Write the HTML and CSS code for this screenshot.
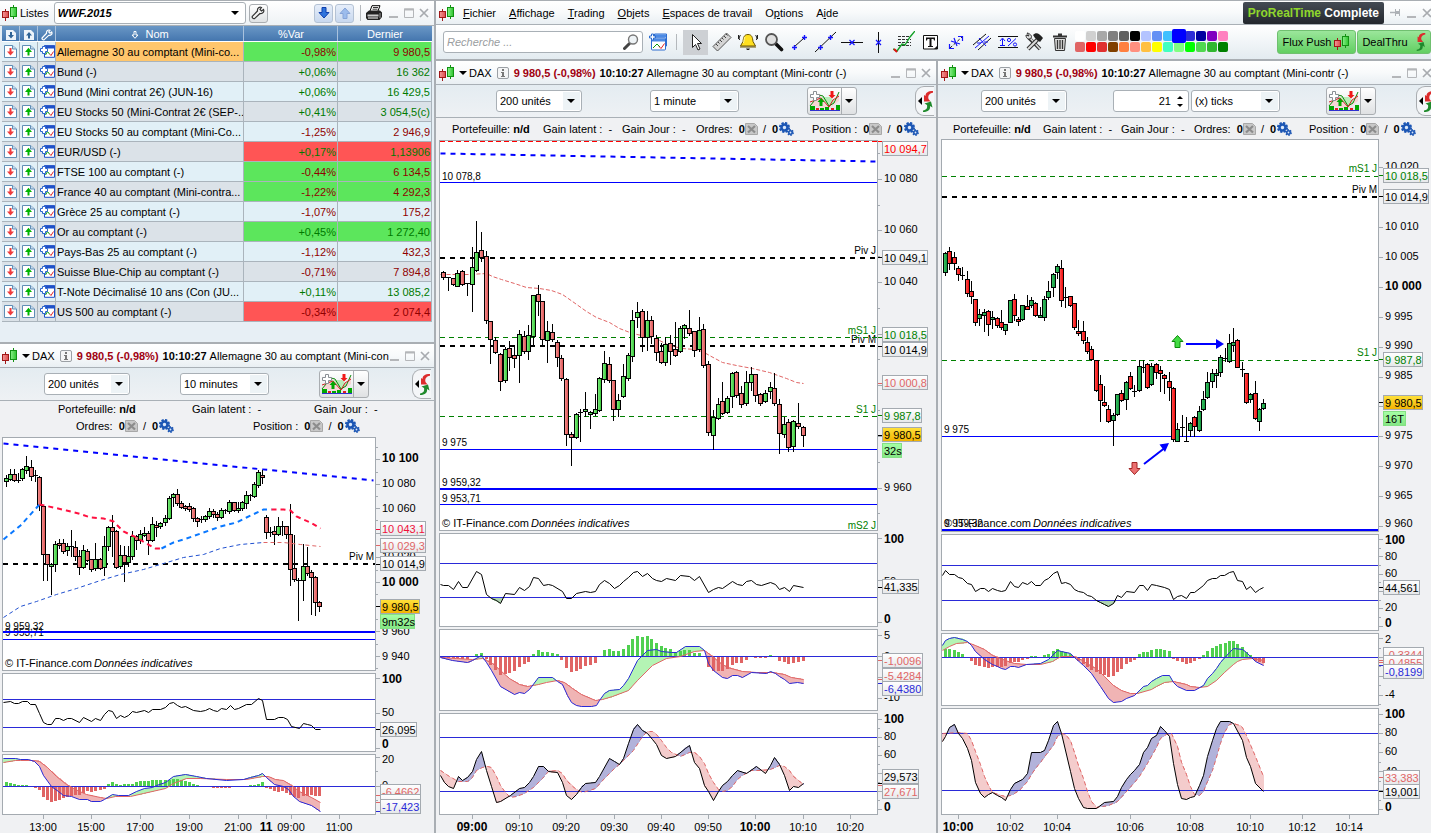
FILE: index.html
```html
<!DOCTYPE html>
<html lang="fr">
<head>
<meta charset="utf-8">
<title>ProRealTime Complete</title>
<link rel="stylesheet" href="styles.css">
</head>
<body>
<svg class="defs" aria-hidden="true">
  <defs>
    <linearGradient id="gr"><stop offset="0" stop-color="#f49a9a"/><stop offset="1" stop-color="#dc4a4a"/></linearGradient>
    <linearGradient id="gg"><stop offset="0" stop-color="#8af08a"/><stop offset="1" stop-color="#2cc42c"/></linearGradient>
    <linearGradient id="gR"><stop offset="0" stop-color="#ff5a5a"/><stop offset="1" stop-color="#f00000"/></linearGradient>
    <linearGradient id="gG"><stop offset="0" stop-color="#3cc868"/><stop offset="1" stop-color="#109038"/></linearGradient>
    <linearGradient id="gy" x2="0" y2="1"><stop offset="0" stop-color="#ffe23c"/><stop offset="1" stop-color="#f2b200"/></linearGradient>
    <linearGradient id="gt" x2="0" y2="1"><stop offset="0" stop-color="#a6ffa6"/><stop offset="1" stop-color="#84e684"/></linearGradient>
    <linearGradient id="gb" x2="0" y2="1"><stop offset="0" stop-color="#fff"/><stop offset="1" stop-color="#e6e8ea"/></linearGradient>
  </defs>
  <symbol id="i-logo" viewBox="0 0 16 16">
    <path d="M3.5 4v12" stroke="#a01818"/><rect x=".5" y="6.5" width="6" height="6" fill="url(#gr)" stroke="#a01818"/>
    <path d="M11.5 0v14" stroke="#129212"/><rect x="8.500" y="2.500" width="6" height="9" fill="url(#gg)" stroke="#129212"/>
  </symbol>
  <symbol id="i-wrench" viewBox="0 0 14 14"><path d="M12.500 3.500 10.500 5 9 3.500 10.500 1.500C8.500.500 6 2 6.500 5L1.500 10.200c-1 1.200.800 3.200 2.300 2.200L9 7.500c3 .400 4.500-2 3.500-4z" fill="#f4f4f4" stroke="currentColor" stroke-width="1.200"/></symbol>
  <symbol id="i-wrench-w" viewBox="0 0 14 14"><path d="M12.500 3.500 10.500 5 9 3.500 10.500 1.500C8.500.500 6 2 6.500 5L1.500 10.200c-1 1.200.800 3.200 2.300 2.200L9 7.500c3 .400 4.500-2 3.500-4z" fill="#4f80b6" stroke="#fff" stroke-width="1.400"/></symbol>
  <symbol id="i-big-down" viewBox="0 0 12 12"><path d="M4 .5h4v5h3L6 11 1 5.500h3z" fill="#2f74dc" stroke="#0d3fae"/></symbol>
  <symbol id="i-big-up" viewBox="0 0 12 12"><path d="M4 11.500h4v-5h3L6 1 1 6.500h3z" fill="#9cbcec" stroke="#86a4d8"/></symbol>
  <symbol id="i-print" viewBox="0 0 18 16"><path d="M5 6 7 .700h8L13 6" fill="#fff" stroke="#000"/><path d="M8 2.500h5M7.500 4.200h5" stroke="#000" stroke-width=".800"/><path d="M1 8l3-2.500h11l2 2V12l-2.500 3H2.500L1 13z" fill="#222"/><path d="M2.500 9.500h11v2h-11z" fill="#ccc"/><path d="M3 13h10" stroke="#fff"/><path d="M15 8v5" stroke="#999"/></symbol>
  <symbol id="i-sheet-down" viewBox="0 0 13 13"><path d="M.5.500h8l4 3.500v8.500H.5z" fill="#fff" stroke="#5f8db5"/><path d="M8.500.500V4h4" fill="#cde" stroke="#5f8db5"/><path d="M5.500 3h2v3.500h2.500L6.500 10.500 3 6.500h2.500z" fill="#f03c3c"/></symbol>
  <symbol id="i-sheet-up" viewBox="0 0 13 13"><path d="M.5.500h8l4 3.500v8.500H.5z" fill="#fff" stroke="#5f8db5"/><path d="M8.500.500V4h4" fill="#cde" stroke="#5f8db5"/><path d="M5.500 10.500h2V7h2.500L6.500 2.800 3 7h2.500z" fill="#00b400"/></symbol>
  <symbol id="i-head-down" viewBox="0 0 12 12"><path d="M1 1h7l3 3v7H1z" fill="#eef4fa"/><path d="M5 3h2v3h2L6 9.500 3 6h2z" fill="#2f6396"/></symbol>
  <symbol id="i-head-up" viewBox="0 0 12 12"><path d="M1 1h7l3 3v7H1z" fill="#eef4fa"/><path d="M5 9.500h2v-3h2L6 3 3 6.500h2z" fill="#2f6396"/></symbol>
  <symbol id="i-sort" viewBox="0 0 8 8"><path d="M3 .5h2v3.500h2L4 7.300 1 4h2z" fill="none" stroke="#fff"/></symbol>
  <symbol id="i-list" viewBox="0 0 16 13"><path d="M5.500.700h10v11.600h-10z" fill="#fff" stroke="#1e50c8"/><path d="M5 .5h11v3H5z" fill="#1e50c8"/><path d="m6.500 10 2-3.500 2 2.500" fill="none" stroke="#0a9a0a"/><path d="m10.500 9 1.500 1.500 2.500-4" fill="none" stroke="#e02020"/><path d="M3.500 1.500h3v2h2v3h-2v2h-3v-2h-2v-3h2z" fill="#fff" stroke="#2a64cc"/></symbol>
  <symbol id="i-win" viewBox="0 0 20 19"><path d="M6.500 1.500h12v12h-12z" fill="#cfe2ff" stroke="#2c6cd0"/><path d="M7 2h11v3H7z" fill="#4c8ae4"/><rect x="3.500" y="5.500" width="14" height="12" rx="1" fill="#fff" stroke="#2c6cd0"/><path d="M4 6h13v3H4z" fill="#4c8ae4"/><path d="m5 15.500 4-4 3 3" fill="none" stroke="#0a9a0a"/><path d="m11 14 2 2 3.500-5" fill="none" stroke="#e02020"/><path d="M3.500 1.500h2v2h2v2h-2v2h-2v-2h-2v-2h2z" fill="#fff" stroke="#2c6cd0"/></symbol>
  <symbol id="i-min" viewBox="0 0 10 10"><path d="M0 8h9v2H0z" fill="#b4b6b9"/></symbol>
  <symbol id="i-max" viewBox="0 0 10 10"><path d="M.5 1h9v8.500h-9z" fill="none" stroke="#b4b6b9"/><path d="M0 .5h10v2H0z" fill="#b4b6b9"/></symbol>
  <symbol id="i-close" viewBox="0 0 10 10"><path d="m1 1 8 8m0-8L1 9" stroke="#a8abaf" stroke-width="1.700"/></symbol>
  <symbol id="i-pin" viewBox="0 0 12 10"><path d="M0 4.500h5" stroke="#adb1b6" stroke-width="1.500"/><path d="M5 1h1v2h3V1h1v7H9V6H6v2H5z" fill="#adb1b6"/></symbol>
  <symbol id="i-caret" viewBox="0 0 8 4"><path d="M0 0h8L4 4z"/></symbol>
  <symbol id="i-info" viewBox="0 0 12 12"><rect x=".5" y=".5" width="11" height="11" rx="1.500" fill="#f4f5f6" stroke="#9ba0a5"/><path d="M5 2h2v2H5zM4 5h3v4h1v1H4V9h1V6H4z" fill="#777"/></symbol>
  <symbol id="i-indic" viewBox="0 0 31 22"><path d="m1 15 8-10 6 3 7 9 8-14v8l-8 6-3 2z" fill="#f8d4d4"/><path d="m12 7 8 10 6-5-5-5z" fill="#b8ecb8"/><path d="M1 16 10 5l4 1 6 10 5-3 5-11" fill="none" stroke="#0a8a0a"/><path d="M1 12 12 8l8 9 4-7 6-4" fill="none" stroke="#cc2020"/><path d="M4.500 1.500h3v3h3v3h-3v3h-3v-3h-3v-3h3z" fill="#fff" stroke="#8a8f94"/><path d="M10.500 16v-4h-2L12 8l3.500 4h-2v4z" fill="#00a800"/><path d="M21.500 1h3v4h2L23 8.500 19.500 5h2z" fill="#f01818"/><path d="M1 20.500h30" stroke="#3030d0"/><path d="M1 16h5v4H1zM11 18h4v2h-4zM16 17h4v3h-4zM27 15h4v5h-4z" fill="#00a800"/><path d="M7 18h3v2H7zM22 18h3v2h-3z" fill="#e02020"/></symbol>
  <symbol id="i-swap" viewBox="0 0 10 21"><path d="M10 0C4.500 0 2.500 2 2.500 5L1 4v6.500h6.500L5.500 8C4.800 5 6 2.500 10 1.800z" fill="#dc2c2c"/><path d="M0 21c5.500 0 7.500-2.500 7-6l2.500 1.500L8 10.500l-6.500 2 2.500 1.500c.6 3-.5 5-4 5.500z" fill="#1f8a2c"/></symbol>
  <symbol id="i-cancel" viewBox="0 0 13 12"><path d="M.5.500h9l3 3v8H.5z" fill="#c8c8c8" stroke="#a8a8a8"/><path d="m3 3 7 6.500M10 3 3 9.500" stroke="#8c8c8c" stroke-width="2.200"/></symbol>
  <symbol id="i-gears" viewBox="0 0 15 14"><circle cx="5.500" cy="5.500" r="4.500" fill="none" stroke="#1c56b4" stroke-width="2.200" stroke-dasharray="2.200 1.330"/><circle cx="5.500" cy="5.500" r="3" fill="#dbe8fa" stroke="#1c56b4" stroke-width="2.600"/><circle cx="11.500" cy="10.500" r="2.700" fill="none" stroke="#1c56b4" stroke-width="1.500" stroke-dasharray="1.500 1.300"/><circle cx="11.500" cy="10.500" r="1.700" fill="#dbe8fa" stroke="#1c56b4" stroke-width="1.600"/></symbol>
  <symbol id="i-search" viewBox="0 0 16 16"><path d="M1.500 14.500 6.500 9.500" stroke="#444" stroke-width="3" stroke-linecap="round"/><circle cx="10" cy="5.500" r="4.500" fill="#eef3f6" stroke="#777" stroke-width="1.400"/></symbol>
  <symbol id="i-pointer" viewBox="0 0 20 20"><path d="M6.500 2.500v13l3-3 2.500 5.500 2-1-2.500-5.500h4z" fill="#fff" stroke="#222"/></symbol>
  <symbol id="i-ruler" viewBox="0 0 20 20"><path d="M1 14.500 14.500 1 19 5.500 5.500 19z" fill="#d4d4d4" stroke="#555"/><path d="m4 12 2 2m0-4 1.500 1.500M8 8l2 2m0-4 1.500 1.500M12 4l2 2m0-4 1.500 1.500" stroke="#444"/></symbol>
  <symbol id="i-bell" viewBox="0 0 20 20"><path d="M10 2.500c-4 0-4.500 3-5 7L2.500 14h15L15 9.500c-.500-4-1-7-5-7z" fill="#ffe020" stroke="#6b5500"/><path d="M7 5c-1 1-1 4-1.500 6" stroke="#fff9b0" fill="none"/><path d="M2 15h16" stroke="#6b5500"/><path d="M8 16.500h4l-1 1.500H9z" fill="#222"/><path d="M2.500 3C1.500 4 1 6 1.500 8M.5 3v4M17.500 3c1 1 1.500 3 1 5M19.500 3v4" fill="none" stroke="#222"/></symbol>
  <symbol id="i-loupe" viewBox="0 0 20 20"><path d="m11 11 6.500 6.500" stroke="#111" stroke-width="3.600" stroke-linecap="round"/><circle cx="7.500" cy="7.500" r="5.500" fill="#e0e0e0" stroke="#555" stroke-width="1.800"/></symbol>
  <symbol id="i-seg" viewBox="0 0 20 20"><path d="m4 15 10-9" stroke="#111"/><path d="M2 15.500h5M4.500 13v5M12 5.500h5M14.500 3v5" stroke="#1414ff" stroke-width="1.400"/></symbol>
  <symbol id="i-ray" viewBox="0 0 22 22"><path d="M0 21 21 1" stroke="#111"/><path d="M3 16.500h5M5.500 14v5M13 6.500h5M15.500 4v5" stroke="#1414ff" stroke-width="1.400"/></symbol>
  <symbol id="i-hl" viewBox="0 0 22 20"><path d="M0 10.500h22" stroke="#111"/><path d="m8.500 8 5 5m0-5-5 5" stroke="#1414ff" stroke-width="1.200"/></symbol>
  <symbol id="i-vl" viewBox="0 0 20 22"><path d="M10.500 1v21" stroke="#111"/><path d="m8 9 5 5m0-5-5 5" stroke="#1414ff" stroke-width="1.200"/></symbol>
  <symbol id="i-fib" viewBox="0 0 22 22"><path d="M5 5.500h13M5 8.500h13M5 11.500h13M5 14.500h13" stroke="#333" stroke-dasharray="3 1"/><path d="m0 18 4 2 5-7 3 1 5-8 5-6" fill="none" stroke="#14a028" stroke-width="1.400"/><path d="m1 18 3 3" stroke="#e01010" stroke-width="2"/></symbol>
  <symbol id="i-text" viewBox="0 0 20 20"><path d="M3.500 3.500h14v13.500h-14z" fill="#fff" stroke="#111"/><path d="M6 5.500h9v3h-1l-.5-1.500h-2V14h1.500v1h-5v-1H9.500V7h-2L7 8.500H6z" fill="#111"/><path d="m14 17 3.500-3.500V17z" fill="#111"/></symbol>
  <symbol id="i-zz" viewBox="0 0 20 20"><path d="M4 16 16 5" stroke="#111" stroke-dasharray="3 2"/><path d="M3.500 12v4.500H8M12 4.500h4.500V9M5 9l9 3M8 6l3 8" fill="none" stroke="#1414ff" stroke-width="1.200"/></symbol>
  <symbol id="i-par" viewBox="0 0 20 20"><path d="M1 13 14 2M6 18 19 6" stroke="#111"/><path d="M3 16 17 4M7 6l7 8M5 11h4M12 10h4" stroke="#1414ff" fill="none"/></symbol>
  <symbol id="i-pct" viewBox="0 0 22 20"><path d="M1 4.500h20M1 15.500h20" stroke="#111"/><path d="M5.500 14V7M3 9l2.500-3L8 9M3 13.500h5M19 6.500l-8 7.500" stroke="#1414ff" fill="none"/><circle cx="12" cy="8" r="1.600" fill="none" stroke="#1414ff"/><circle cx="18" cy="12.500" r="1.600" fill="none" stroke="#1414ff"/></symbol>
  <symbol id="i-tools" viewBox="0 0 20 20"><path d="m5 6 11 11" stroke="#333" stroke-width="3.600"/><path d="m6 6 10 11" stroke="#ddd" stroke-width="1.500"/><path d="M2 3c0 4 3 5 5 3S5 1 3 1l2 3z" fill="#ddd" stroke="#333"/><path d="M14 7 4 17" stroke="#333" stroke-width="4"/><path d="M13 8 4 17" stroke="#ddd" stroke-width="2"/><path d="M9 3c3-3 6-2 10 3l-3 4-5-4z" fill="#222"/></symbol>
  <symbol id="i-trash" viewBox="0 0 20 20"><path d="M4.500 6.500h11l-1 12h-9z" fill="#ddd" stroke="#333"/><path d="M7.500 8v9M10 8v9M12.500 8v9" stroke="#333" stroke-width="1.300"/><path d="M3 4.500h14M8 2.500h4" stroke="#333" stroke-width="2.200"/></symbol>
</svg>

<main class="desk">
  <section class="col left">
    <section class="lists">
      <header class="bar lists-bar">
        <svg class="logo"><use href="#i-logo"/></svg>
        <label for="lst">Listes</label>
        <span class="drop wide"><select id="lst"><option>WWF.2015</option></select></span>
        <button class="sq" aria-label="Réglages"><svg width="14" height="14"><use href="#i-wrench"/></svg></button>
        <span class="grow"></span>
        <button class="sq blue" aria-label="Descendre"><svg width="12" height="12"><use href="#i-big-down"/></svg></button>
        <button class="sq blue" aria-label="Monter"><svg width="12" height="12"><use href="#i-big-up"/></svg></button>
        <i class="rule"></i>
        <button class="bare" aria-label="Imprimer"><svg width="18" height="16"><use href="#i-print"/></svg></button>
        <span class="wbtns"><button aria-label="Réduire"><svg><use href="#i-min"/></svg></button><button aria-label="Agrandir"><svg><use href="#i-max"/></svg></button><button aria-label="Fermer"><svg><use href="#i-close"/></svg></button></span>
      </header>
      <table class="quotes">
        <colgroup><col class="c-i"><col class="c-i"><col class="c-i"><col><col class="c-v"><col class="c-d"></colgroup>
        <thead><tr>
          <th><svg width="12" height="12"><use href="#i-head-down"/></svg></th>
          <th><svg width="12" height="12"><use href="#i-head-up"/></svg></th>
          <th><svg width="12" height="12"><use href="#i-wrench-w"/></svg></th>
          <th><svg width="8" height="8"><use href="#i-sort"/></svg>&nbsp; Nom</th><th>%Var</th><th>Dernier</th>
        </tr></thead>
        <tbody id="quotes"></tbody>
      </table>
    </section>
    <section class="panel">
      <header class="bar title">
        <svg class="logo"><use href="#i-logo"/></svg><svg class="car"><use href="#i-caret"/></svg>
        <span>DAX</span><svg class="inf"><use href="#i-info"/></svg>
        <b class="px">9 980,5 (-0,98%)</b><b>10:10:27</b><span class="name">Allemagne 30 au comptant (Mini-con</span>
        <span class="wbtns"><button aria-label="Réduire"><svg><use href="#i-min"/></svg></button><button aria-label="Agrandir"><svg><use href="#i-max"/></svg></button><button aria-label="Fermer"><svg><use href="#i-close"/></svg></button></span>
      </header>
      <div class="tools t-left">
        <span class="drop"><select aria-label="Unités"><option>200 unités</option></select></span>
        <span class="drop tf"><select aria-label="Période"><option>10 minutes</option></select></span>
        <span class="indic"><button aria-label="Indicateurs"><svg width="31" height="22"><use href="#i-indic"/></svg></button><button aria-label="Menu indicateurs"><svg class="car"><use href="#i-caret"/></svg></button></span>
        <button class="edge" aria-label="Passage d’ordre"><i></i><svg width="10" height="21"><use href="#i-swap"/></svg></button>
      </div>
      <div class="info two">
        <div><span>Portefeuille: <b>n/d</b></span><span>Gain latent :&nbsp; -</span><span>Gain Jour :&nbsp; -</span></div>
        <div><span>Ordres: <b>0</b><svg class="cn"><use href="#i-cancel"/></svg> / <b>0</b><svg class="ge"><use href="#i-gears"/></svg></span><span>Position : <b>0</b><svg class="cn"><use href="#i-cancel"/></svg> / <b>0</b><svg class="ge"><use href="#i-gears"/></svg></span></div>
      </div>
      <div class="chart" id="chart-left"></div>
    </section>
  </section>

  <section class="top">
    <nav class="bar menu">
      <svg class="logo"><use href="#i-logo"/></svg>
      <a href="#"><u>F</u>ichier</a><a href="#"><u>A</u>ffichage</a><a href="#"><u>T</u>rading</a><a href="#"><u>O</u>bjets</a><a href="#"><u>E</u>spaces de travail</a><a href="#">O<u>p</u>tions</a><a href="#">A<u>i</u>de</a>
      <span class="grow"></span>
      <span class="brand"><em>ProRealTime</em> Complete</span>
      <span class="wbtns cut"><button class="pin" aria-label="Épingler"><svg><use href="#i-pin"/></svg></button><button aria-label="Réduire"><svg><use href="#i-min"/></svg></button><button aria-label="Fermer"><svg><use href="#i-close"/></svg></button></span>
    </nav>
    <div class="main-tools">
      <label class="search"><input type="text" placeholder="Recherche ..." aria-label="Recherche"><svg width="16" height="16"><use href="#i-search"/></svg></label>
      <button class="tool win" aria-label="Fenêtres"><svg width="20" height="19"><use href="#i-win"/></svg></button>
      <i class="rule"></i>
      <button class="tool on" aria-label="Pointeur"><svg><use href="#i-pointer"/></svg></button>
      <button class="tool" aria-label="Règle"><svg><use href="#i-ruler"/></svg></button>
      <button class="tool" aria-label="Alerte"><svg><use href="#i-bell"/></svg></button>
      <button class="tool" aria-label="Zoom"><svg><use href="#i-loupe"/></svg></button>
      <button class="tool" aria-label="Segment"><svg><use href="#i-seg"/></svg></button>
      <button class="tool" aria-label="Droite"><svg class="big"><use href="#i-ray"/></svg></button>
      <button class="tool" aria-label="Ligne horizontale"><svg class="big"><use href="#i-hl"/></svg></button>
      <button class="tool" aria-label="Ligne verticale"><svg class="big"><use href="#i-vl"/></svg></button>
      <button class="tool" aria-label="Fibonacci"><svg class="big"><use href="#i-fib"/></svg></button>
      <button class="tool" aria-label="Texte"><svg><use href="#i-text"/></svg></button>
      <button class="tool" aria-label="Zigzag"><svg><use href="#i-zz"/></svg></button>
      <button class="tool" aria-label="Parallèles"><svg><use href="#i-par"/></svg></button>
      <button class="tool" aria-label="Pourcentage"><svg class="big"><use href="#i-pct"/></svg></button>
      <button class="tool" aria-label="Outils"><svg><use href="#i-tools"/></svg></button>
      <button class="tool" aria-label="Supprimer"><svg><use href="#i-trash"/></svg></button>
      <div class="palette" id="palette"></div>
      <span class="grow"></span>
      <button class="green">Flux Push <svg width="16" height="16"><use href="#i-logo"/></svg></button>
      <button class="green last">DealThru <svg width="10" height="18"><use href="#i-swap"/></svg></button>
    </div>
  </section>

  <section class="col panel mid">
    <header class="bar title">
      <svg class="logo"><use href="#i-logo"/></svg><svg class="car"><use href="#i-caret"/></svg>
      <span>DAX</span><svg class="inf"><use href="#i-info"/></svg>
      <b class="px">9 980,5 (-0,98%)</b><b>10:10:27</b><span class="name">Allemagne 30 au comptant (Mini-contr (-)</span>
      <span class="wbtns"><button aria-label="Réduire"><svg><use href="#i-min"/></svg></button><button aria-label="Agrandir"><svg><use href="#i-max"/></svg></button><button aria-label="Fermer"><svg><use href="#i-close"/></svg></button></span>
    </header>
    <div class="tools t-mid">
      <span class="drop"><select aria-label="Unités"><option>200 unités</option></select></span>
      <span class="drop tf"><select aria-label="Période"><option>1 minute</option></select></span>
      <span class="indic"><button aria-label="Indicateurs"><svg width="31" height="22"><use href="#i-indic"/></svg></button><button aria-label="Menu indicateurs"><svg class="car"><use href="#i-caret"/></svg></button></span>
      <button class="edge" aria-label="Passage d’ordre"><i></i><svg width="10" height="21"><use href="#i-swap"/></svg></button>
    </div>
    <div class="info one">
      <span>Portefeuille: <b>n/d</b></span><span>Gain latent :&nbsp; -</span><span>Gain Jour :&nbsp; -</span><span>Ordres: <b>0</b><svg class="cn"><use href="#i-cancel"/></svg> / <b>0</b><svg class="ge"><use href="#i-gears"/></svg></span><span>Position : <b>0</b><svg class="cn"><use href="#i-cancel"/></svg> / <b>0</b><svg class="ge"><use href="#i-gears"/></svg></span>
    </div>
    <div class="chart" id="chart-mid"></div>
  </section>

  <section class="col panel right">
    <header class="bar title">
      <svg class="logo"><use href="#i-logo"/></svg><svg class="car"><use href="#i-caret"/></svg>
      <span>DAX</span><svg class="inf"><use href="#i-info"/></svg>
      <b class="px">9 980,5 (-0,98%)</b><b>10:10:27</b><span class="name">Allemagne 30 au comptant (Mini-contr (-)</span>
      <span class="wbtns cut"><button aria-label="Réduire"><svg><use href="#i-min"/></svg></button><button aria-label="Agrandir"><svg><use href="#i-max"/></svg></button><button aria-label="Fermer"><svg><use href="#i-close"/></svg></button></span>
    </header>
    <div class="tools t-right">
      <span class="drop"><select aria-label="Unités"><option>200 unités</option></select></span>
      <span class="stepper"><input type="text" inputmode="numeric" value="21" aria-label="Nombre de ticks"><span><button class="up" aria-label="Plus"></button><button class="down" aria-label="Moins"></button></span></span>
      <span class="drop tf"><select aria-label="Période"><option>(x) ticks</option></select></span>
      <span class="indic"><button aria-label="Indicateurs"><svg width="31" height="22"><use href="#i-indic"/></svg></button><button aria-label="Menu indicateurs"><svg class="car"><use href="#i-caret"/></svg></button></span>
      <button class="edge" aria-label="Passage d’ordre"><i></i><svg width="10" height="21"><use href="#i-swap"/></svg></button>
    </div>
    <div class="info one">
      <span>Portefeuille: <b>n/d</b></span><span>Gain latent :&nbsp; -</span><span>Gain Jour :&nbsp; -</span><span>Ordres: <b>0</b><svg class="cn"><use href="#i-cancel"/></svg> / <b>0</b><svg class="ge"><use href="#i-gears"/></svg></span><span>Position : <b>0</b><svg class="cn"><use href="#i-cancel"/></svg> / <b>0</b><svg class="ge"><use href="#i-gears"/></svg></span>
    </div>
    <div class="chart" id="chart-right"></div>
  </section>
</main>
<script src="app.js"></script>
</body>
</html>
```

FILE: styles.css
```css
* { box-sizing: border-box; }
body { margin: 0; background: #e7eff5; color: #000; font: 11px/14px "Liberation Sans", Arial, sans-serif; }
button, input, select { font: inherit; color: inherit; }
button { padding: 0; border: 0; background: none; display: inline-flex; align-items: center; justify-content: center; }
svg { display: block; flex: none; }
a { color: inherit; text-decoration: none; }
.defs { position: absolute; width: 0; height: 0; }
.grow { flex: 1; }
.rule { width: 1px; height: 16px; background: #b4b8bc; }

.desk { display: grid; grid-template-columns: minmax(0, 436fr) minmax(0, 502fr) minmax(0, 493fr); grid-template-rows: auto 1fr; }
.left { grid-row: 1 / 3; border-right: 2px solid #a9aeb3; display: flex; flex-direction: column; }
.top { grid-column: 2 / 4; border-bottom: 2px solid #a9aeb3; }
.mid { border-right: 2px solid #a9aeb3; }
.col { min-width: 0; }

.bar { display: flex; align-items: center; height: 24px; border-bottom: 1px solid #a9b0b6; background: linear-gradient(#fff, #f8fafb 50%, #e9eff3); }
.logo { width: 16px; height: 16px; margin-left: 2px; }
.car { width: 8px; height: 4px; }
.wbtns { display: flex; gap: 5px; margin-left: auto; padding-right: 5px; }
.wbtns svg { width: 10px; height: 10px; }
.wbtns .pin svg { width: 12px; }
.title .cut { padding-right: 0; margin-right: -1px; }
.menu .cut { gap: 5px; padding-left: 6px; margin: 0 -1px 0 0; padding-right: 0; }
.title { white-space: nowrap; overflow: hidden; }
.title .logo { margin-left: 3px; }
.left .title .logo { margin-left: 2px; }
.title .car { margin: 0 2px 0 4px; }
.title .inf { width: 12px; height: 12px; margin: 0 5px; }
.title .px { color: #a00010; margin-right: 4px; }
.title .name { margin-left: 3px; }

.lists { height: 342px; border-top: 1px solid #a9aeb3; }
.lists-bar { height: 25px; background: linear-gradient(#fff, #eef2f5); }
.lists-bar label { margin: 0 5px 0 2px; }
.drop { position: relative; display: inline-flex; width: 86px; height: 22px; border: 1px solid #a9b0b6; border-radius: 3px; background: #fff; }
.drop.tf { width: 89px; }
.drop.wide { width: 192px; }
.drop select { appearance: none; border: 0; background: none; width: 100%; padding: 0 18px 0 3px; outline: 0; }
.drop.wide select { font-weight: bold; font-style: italic; }
.drop::after { content: ""; position: absolute; right: 6px; top: 8px; border: 4px solid transparent; border-top: 4px solid #000; border-bottom: 0; pointer-events: none; }
.tools .drop::before { content: ""; position: absolute; right: 1px; top: 1px; width: 17px; height: 18px; background: #edf3f6; }
.sq { width: 19px; height: 19px; margin-left: 3px; border: 1px solid #a9adb1; border-radius: 3px; background: linear-gradient(#fff, #dfe2e4); color: #333; }
.sq.blue { background: linear-gradient(#e6eefa, #c8d8ee); border-color: #b4c2d4; }
.lists-bar .blue + .blue { margin-left: 2px; }
.lists-bar .rule { margin: 0 4px 0 6px; }
.lists-bar .wbtns { margin-left: 6px; }

.quotes { width: calc(100% - 4px); margin: 0 0 0 2px; border-spacing: 0; table-layout: fixed; }
.c-i { width: 18px; }
.c-v { width: 94px; }
.c-d { width: 94px; }
.quotes th { height: 16px; padding: 0; color: #fff; font-weight: normal; background: linear-gradient(#6a97c6, #4476ae); border-bottom: 1px solid #fff; line-height: 14px; }
.quotes th svg { display: inline-block; vertical-align: middle; }
.quotes th:not(:last-child) { box-shadow: inset -1px 0 #a9c2de; }
.quotes td { height: 20px; padding: 0 1px 0 2px; border-right: 1px solid #aab4bc; border-bottom: 1px solid #aab4bc; background: #e1f0f7; white-space: nowrap; overflow: hidden; line-height: 16px; }
.quotes tr:nth-child(even) td { background: #dbe2e8; }
.quotes td.nm { padding: 0 0 0 1px; }
.quotes td.ls { padding: 0 0 0 1px; }
.quotes td.n { text-align: right; }
.quotes tr td.sel { background: #ffc66c; }
.quotes tr td.bg-g { background: #5ce65c; }
.quotes tr td.bg-r { background: #ff5555; }
.pos { color: #007a00; }
.neg { color: #900000; }

.left .panel { border-top: 2px solid #a9aeb3; }
.left .title .wbtns { padding-right: 4px; }
.tools { display: flex; align-items: center; height: 33px; border-bottom: 1px solid #a9b0b6; background: linear-gradient(#e4ecf1, #eef1f4); }
.t-left { padding-left: 44px; }
.t-left .tf { margin: 0 50px; }
.t-mid { padding-left: 60px; }
.t-mid .tf { margin: 0 68px; }
.t-right { padding-left: 43px; }
.t-right .tf { margin: 0 46px 0 2px; }
.stepper { display: flex; width: 76px; height: 22px; margin-left: 46px; border: 1px solid #a9b0b6; border-radius: 3px; background: #fff; padding: 1px 2px; }
.stepper input { flex: 1; width: 10px; min-width: 0; border: 0; padding: 0; text-align: right; background: none; outline: 0; }
.stepper > span { display: flex; flex-direction: column; justify-content: center; gap: 5px; width: 15px; padding-left: 6px; }
.stepper button { width: 0; border: 3px solid transparent; }
.stepper .up { border-bottom: 3px solid #000; border-top: 0; }
.stepper .down { border-top: 3px solid #000; border-bottom: 0; }
.indic { display: flex; height: 28px; border: 1px solid #a9adb1; border-radius: 3px; background: linear-gradient(#fff, #dfe1e3); }
.indic button:first-child { width: 34px; border-right: 1px solid #a9adb1; }
.indic button:last-child { width: 14px; }
.edge { margin-left: auto; width: 19px; height: 30px; border: 1px solid #a9adb1; border-right: 0; border-radius: 9px 0 0 9px; background: #f4f6f8; gap: 1px; }
.edge i { border: 4px solid transparent; border-right-color: #000; border-left: 0; }
.left .edge { margin-right: 3px; }
.mid .edge { margin-right: 2px; }
.right .edge { margin-right: -4px; }
.right { overflow: hidden; }

.info { background: #f0f1f3; white-space: nowrap; }
.info span { display: inline-flex; align-items: center; white-space: pre; }
.info b:not(:only-of-type) { margin-left: 3px; }
.info.one { display: grid; grid-template-columns: 91px 79px 74px 116px auto; align-items: center; height: 20px; padding: 2px 0 0 16px; }
.info.two { height: 35px; }
.right .info.one { padding-left: 15px; grid-template-columns: 90px 78px 73px 115px auto; }
.info.two div { display: grid; align-items: center; height: 17px; }
.info.two div:first-child { grid-template-columns: 134px 122px auto; padding-left: 58px; height: 16px; }
.info.two div:last-child { grid-template-columns: 177px auto; padding-left: 76px; }
.cn { width: 13px; height: 12px; margin-right: 2px; }
.ge { width: 15px; height: 14px; margin-left: 1px; }

.top .menu { border-top: 1px solid #a9aeb3; height: 25px; }
.menu { gap: 13px; }
.menu .logo { margin: 0 -5px 0 3px; }
.brand { height: 22px; padding: 0 5px; border-radius: 2px; background: linear-gradient(#444b54, #23272d); color: #fff; font: bold 12px/22px "Liberation Sans", Arial, sans-serif; margin-right: -13px; }
.brand em { color: #8fd62c; font-style: normal; }
.main-tools { display: flex; align-items: center; height: 34px; padding-left: 7px; background: linear-gradient(#fff, #e3ebf0); }
.search { display: flex; align-items: center; width: 200px; height: 22px; padding: 0 3px; border: 1px solid #a9b0b6; border-radius: 3px; background: #fff; }
.search input { flex: 1; min-width: 0; border: 0; padding: 0; outline: 0; font-style: italic; background: none; }
.search input::placeholder { color: #9a9da0; opacity: 1; }
.tool { width: 26px; height: 25px; flex: none; }
.tool svg { width: 20px; height: 20px; }
.tool svg.big { width: 22px; height: 22px; }
.tool.win { width: 29px; margin-right: 4px; }
.main-tools .rule { margin-right: 6px; flex: none; }
.tool.on { width: 25px; background: #cdd0d4; margin-right: 1px; }
.palette { display: grid; grid-template-columns: repeat(14, 11px); margin-left: 2px; }
.palette button { width: 10px; height: 10px; margin-bottom: 1px; border-radius: 2px; }
.palette button.cur { width: 14px; height: 14px; margin: -2px 0 -2px -2px; position: relative; }
.green { width: 79px; height: 24px; border-radius: 3px; border: 1px solid #70c070; background: linear-gradient(#9be69b, #62cf62); gap: 3px; flex: none; margin-right: 1px; }
.green.last { width: 74px; margin-right: 0; gap: 8px; }

.chart { background: #f0f1f3; }
.pane { width: 100%; height: auto; overflow: visible; font: 11px "Liberation Sans", Arial, sans-serif; }
.pane .b { font-weight: bold; font-size: 12px; }
.pane .mk { font-size: 10px; }
.pane .it { font-style: italic; }
.pane .crisp { shape-rendering: crispEdges; }
.pane .mid-t { text-anchor: middle; }
.pane .end { text-anchor: end; }
```

FILE: app.js
```js
/* Watch list */
const rows = [
  ["Allemagne 30 au comptant (Mini-co...", "-0,98%", "9 980,5", "g"],
  ["Bund (-)", "+0,06%", "16 362", ""],
  ["Bund (Mini contrat 2€) (JUN-16)", "+0,06%", "16 429,5", ""],
  ["EU Stocks 50 (Mini-Contrat 2€ (SEP-...", "+0,41%", "3 054,5(c)", ""],
  ["EU Stocks 50 au comptant (Mini-Co...", "-1,25%", "2 946,9", ""],
  ["EUR/USD (-)", "+0,17%", "1,13906", "r"],
  ["FTSE 100 au comptant (-)", "-0,44%", "6 134,5", "g"],
  ["France 40 au comptant (Mini-contra...", "-1,22%", "4 292,3", "g"],
  ["Grèce 25 au comptant (-)", "-1,07%", "175,2", ""],
  ["Or au comptant (-)", "+0,45%", "1 272,40", "g"],
  ["Pays-Bas 25 au comptant (-)", "-1,12%", "432,3", ""],
  ["Suisse Blue-Chip au comptant (-)", "-0,71%", "7 894,8", ""],
  ["T-Note Décimalisé 10 ans (Con (JU...", "+0,11%", "13 085,2", ""],
  ["US 500 au comptant (-)", "-0,34%", "2 074,4", "r"]
];
const ico = (id, w) => `<svg width="${w}" height="13"><use href="#${id}"/></svg>`;
document.getElementById("quotes").innerHTML = rows.map(([n, v, d, bg], i) => {
  const c = `n ${v[0] === "+" ? "pos" : "neg"} ${bg ? "bg-" + bg : ""}`;
  return `<tr><td>${ico("i-sheet-down", 13)}</td><td>${ico("i-sheet-up", 13)}</td><td class="ls">${ico("i-list", 16)}</td>
    <td class="nm ${i ? "" : "sel"}">${n}</td><td class="${c}">${v}</td><td class="${c}">${d}</td></tr>`;
}).join("");

/* Colour palette */
const swatches = "#ffffff #d0d0d0 #a8a8a8 #808080 #606060 #000000 #b4c4ff #6490f4 #40c0ff #0000ff #2c2cd8 #0000a0 #8000c0 #ff80c0 #e06464 #ff0000 #e03030 #804000 #ff8040 #ff9080 #ffc040 #ffff00 #40ffc0 #80ff80 #00ff00 #50d850 #30b830 #008000".split(" ");
document.getElementById("palette").innerHTML = swatches.map((c, i) =>
  `<button aria-label="${c}" class="${i === 9 ? "cur" : ""}" style="background:${c}"></button>`).join("");

/* Charts. Series are stored in thirds of a pixel from the pane origin. */
const BLUE = "#2a2ad8", PURE = "#0000ff", SAL = "#e06666", GRN = "#008000", GREY = "#a4aab0";
const pts = s => s.trim().split(/\s+/).map(p => p.split(",").map(Number));

function pane(cfg) {
  const { ox, oy, x0, x1, left, right, top, bottom, y0, y1 } = cfg;
  const X = v => ox + Math.floor(v / 3), Y = v => oy + Math.floor(v / 3);
  let o = "";
  const path = (p, c, w = 1, dash = "") =>
    `<path d="M${p.map(([x, y]) => (X(x) + .5) + " " + (Y(y) + .5)).join("L")}" fill="none" stroke="${c}" stroke-width="${w}" ${dash ? `stroke-dasharray="${dash}"` : ""}/>`;
  if (top !== undefined) {
    o += `<rect class="crisp" x="${left + .5}" y="${top + .5}" width="${right - left}" height="${bottom - top}" fill="#fff" stroke="${GREY}"/>`;
  }
  /* horizontal levels */
  const level = ([y, c, w = 1, dash = ""]) =>
    `<path class="crisp" d="M${left + 1} ${Y(y) + (w % 2 ? .5 : 0)}H${right}" stroke="${c}" stroke-width="${w}" ${dash ? `stroke-dasharray="${dash}"` : ""}/>`;
  const text = ([t, x, y, cls = "", c = "#000"]) => `<text x="${X(x)}" y="${Y(y)}" class="${cls}" fill="${c}">${t}</text>`;
  (cfg.texts || []).forEach(t => o += text(t));
  /* area between two curves, coloured by which one is higher */
  (cfg.fills || []).forEach(([a, b, up, down]) => {
    const A = pts(a), B = pts(b);
    const at = (p, x) => {
      let i = 1;
      while (i < p.length - 1 && p[i][0] < x) i++;
      const [xa, ya] = p[i - 1], [xb, yb] = p[i];
      return ya + (yb - ya) * Math.min(1, Math.max(0, (x - xa) / (xb - xa)));
    };
    let u = "", d = "";
    for (let x = A[0][0]; x < A[A.length - 1][0]; x += 3) {
      const ya = at(A, x + 1), yb = at(B, x + 1);
      const r = `M${X(x)} ${Y(Math.min(ya, yb))}h1V${Y(Math.max(ya, yb)) + 1}h-1z`;
      if (ya < yb) u += r; else d += r;
    }
    o += `<path class="crisp" d="${u}" fill="${up}"/><path class="crisp" d="${d}" fill="${down}"/>`;
  });
  /* histogram */
  if (cfg.bars) {
    const { zero, x: bx, step, data } = cfg.bars;
    data.split(",").forEach((v, k) => {
      if (+v === 0) return;
      const x = X(bx + step * k) - 1, a = Y(Math.min(v, zero)), b = Y(Math.max(v, zero));
      o += `<rect class="crisp" x="${x}" y="${a}" width="3" height="${Math.max(1, b - a)}" fill="${v < zero ? "#50d050" : "#e06464"}"/>`;
    });
  }
  (cfg.levels || []).forEach(l => o += level(l));
  (cfg.under || []).forEach(([s, ...r]) => o += path(pts(s), ...r));
  if (cfg.candles) {
    const { x: cx, step, data, up, down } = cfg.candles;
    o += '<g class="crisp" stroke="#000">';
    data.trim().split(/\s+/).forEach((s, k) => {
      const [h, t, b, l, c] = s.split(","), x = X(cx + step * k) + .5;
      o += `<path d="M${x} ${Y(h)}V${Y(l) + 1}"/>`;
      const a = Y(t), z = Y(b);
      if (z - a < 2) o += `<path d="M${x - 2.5} ${a + .5}h5"/>`;
      else o += `<rect x="${x - 2}" y="${a + .5}" width="4" height="${z - a}" fill="url(#${c === "g" ? up : down})"/>`;
    });
    o += "</g>";
  }
  (cfg.lines || []).forEach(([s, ...r]) => o += path(pts(s), ...r));
  o += cfg.extra || "";
  /* value scale */
  (cfg.major || []).forEach(y => o += `<path class="crisp" d="M${right + 1} ${Y(y) + .5}h4" stroke="${GREY}"/>`);
  (cfg.minor || []).forEach(y => o += `<path class="crisp" d="M${right + 1} ${Y(y) + .5}h2" stroke="${GREY}"/>`);
  (cfg.scale || []).forEach(([t, y, b]) => o += `<text x="${right + 7}" y="${Y(y)}" class="${b ? "b" : ""}">${t}</text>`);
  (cfg.badges || []).forEach(([t, y, w, c, kind, ty]) => {
    const fill = { y: "url(#gy)", t: "url(#gt)" }[kind] || "url(#gb)";
    const m = ty === undefined ? y + 22 : ty;
    if (kind !== "t") o += `<path class="crisp" d="M${right + 1} ${Y(m) + .5}h4" stroke="${c}"/>`;
    o += `<rect class="crisp" x="${right + 5.5}" y="${Y(y) + .5}" width="${w}" height="14" fill="${fill}" stroke="${kind === "t" ? "#84e084" : GREY}"/>`;
    if (t) o += `<text x="${right + 7}" y="${Y(y) + 12}" fill="${c}">${t}</text>`;
  });
  /* time scale */
  (cfg.times || []).forEach(([t, x, b]) => {
    o += `<path class="crisp" d="M${X(x) + .5} ${y0}v4" stroke="${GREY}"/><text x="${X(x)}" y="${y0 + 16}" class="mid-t ${b ? "b" : ""}">${t}</text>`;
  });
  return `<svg class="pane" viewBox="${x0} ${y0} ${x1 - x0} ${y1 - y0}">${o}</svg>`;
}
const draw = (id, base, panes) =>
  document.getElementById(id).innerHTML = panes.map(p => pane({ ...base, ...p })).join("");

const notice = (y, x) => [["© IT-Finance.com", x, y], ["Données indicatives", x + 269, y, "it"]];
const K = "#000";

/* 10-minute chart */
const lm = "9,295 45,295 60,298 85,299 103,305 118,320 130,345 154,380 175,395 190,405 215,408 238,418 262,419 275,425 300,423 312,417 337,404 355,407 386,406 410,395 433,386 457,383 470,377 497,367 521,349 557,343 590,350 620,355 680,360 730,358 750,352 775,345 788,340 800,353 823,374 850,380 865,388 880,408 898,424 935,437 960,455";
const ls = "9,307 45,302 60,300 100,302 118,303 142,322 170,348 200,372 225,388 260,404 300,413 320,415 345,408 390,408 430,401 497,384 521,370 560,355 600,356 680,358 740,357 788,350 805,350 825,358 850,362 875,375 898,395 935,413 960,428";
draw("chart-left", { ox: 0, x0: 0, x1: 434, left: 2, right: 375 }, [
  { oy: 430, top: 437, bottom: 670, y0: 436, y1: 672,
    levels: [[402, K, 2, "5 5"], [606, PURE, 2], [628, PURE, 1]],
    texts: [["9 959,32", 15, 600, "mk"], ["9 953,71", 15, 620, "mk"], ["Piv M", 1123, 392, "end mk"], ...notice(712, 15)],
    under: [["9,40 1120,151", PURE, 2, "5 5"]],
    candles: { x: 20, step: 12.18, up: "gg", down: "gr", data: `135,146,153,168,g 117,133,148,150,g 117,133,152,155,r 130,150,152,158,r 115,118,145,150,g 80,108,120,130,g 92,112,138,152,r 120,137,139,155,r 140,143,227,240,r 225,229,374,450,r 372,374,404,452,r 400,403,409,494,g 335,344,403,425,g 328,340,346,355,r 328,340,364,370,r 340,349,362,375,g 300,350,353,380,g 335,352,380,390,r 360,378,412,433,r 345,360,412,415,g 357,364,390,395,r 388,388,418,425,r 340,388,415,422,g 385,388,415,418,r 318,350,412,437,g 288,291,350,360,g 256,291,303,380,r 300,303,412,415,r 345,376,409,415,g 350,376,398,455,r 350,378,398,408,g 305,318,380,388,g 316,318,330,358,r 300,312,330,340,g 293,310,316,320,g 305,310,332,372,r 263,283,332,335,g 275,285,291,320,r 276,280,290,296,g 255,264,278,285,g 200,205,265,268,g 190,193,203,230,g 178,194,220,225,r 215,220,233,235,r 225,230,234,242,r 220,229,237,243,r 232,236,266,275,r 262,265,275,288,r 260,267,272,278,g 255,259,267,275,g 235,243,259,265,g 238,243,253,262,r 246,253,262,272,r 235,241,262,265,g 237,241,244,250,r 212,216,245,250,g 216,218,240,243,r 218,234,240,246,g 215,218,235,240,g 185,195,220,235,g 192,197,200,210,r 158,163,200,203,g 122,127,165,172,g 120,135,142,160,r 255,262,308,325,r 293,306,307,320,r 290,305,313,342,r 262,289,313,315,g 275,289,290,315,g 288,290,313,325,r 222,313,418,465,r 315,415,448,455,r 445,450,452,572,r 342,410,452,510,g 352,408,430,435,r 422,428,443,552,r 440,442,517,555,r 515,518,530,545,r` },
    lines: [["9,327 60,285 118,224", "#0a78ff", 2, "5 4"], ["118,222 160,233 200,240 235,250 270,262 310,266 340,275 370,303 410,322 440,340 465,354 485,356", "#ff1040", 2, "5 4"],
      ["485,356 520,338 560,325 610,307 660,288 710,277 740,262 790,239 815,238", "#0a78ff", 2, "5 4"], ["815,238 850,238 870,242 890,258 930,277 960,296", "#ff1040", 2, "5 4"],
      ["9,562 60,530 110,513 170,494 230,474 300,452 360,432 430,418 490,400 550,382 610,373 660,356 720,343 790,337", "#2050d0", 1, "4 3"],
      ["790,337 850,338 900,343 960,349", SAL, 1, "4 3"]],
    major: [87, 162, 235, 309, 383, 457, 604, 679], minor: [51, 126, 199, 272, 346, 421, 493, 568, 642, 715],
    scale: [["10 100", 98, 1], ["10 080", 173], ["10 060", 246], ["10 020", 392], ["10 000", 468, 1], ["9 960", 615], ["9 940", 690]],
    badges: [["10 043,1", 275, 45, "#f0103c"], ["10 029,3", 325, 45, SAL], ["10 014,9", 380, 45, K], ["9 980,5", 508, 39, K, "y"], ["9m32s", 554, 34, K, "t"]] },
  { oy: 660, top: 673, bottom: 751, y0: 672, y1: 753, levels: [[118, BLUE], [203, BLUE]],
    lines: [["9,127 30,125 42,130 55,130 68,124 82,124 92,133 105,134 118,160 130,187 142,193 154,193 166,176 178,176 190,181 202,176 215,176 238,187 250,172 275,184 287,176 300,181 312,163 325,152 337,153 350,175 362,166 374,172 386,167 398,154 410,157 433,152 445,157 457,149 480,147 497,142 509,130 521,128 531,136 545,143 557,140 580,152 600,154 615,152 628,145 640,151 652,154 665,146 680,149 691,137 704,149 715,146 740,134 755,133 775,115 788,120 799,178 823,178 835,173 850,173 862,178 875,200 898,205 910,190 922,193 935,197 947,208 960,208", K]],
    major: [55, 160, 264], scale: [["100", 71, 1], ["50", 170], ["0", 266, 1]], badges: [["26,095", 186, 36, K]] },
  { oy: 660, top: 754, bottom: 814, y0: 753, y1: 815, fills: [[lm, ls, "#b4f4b4", "#f0b4b4"]],
    bars: { zero: 379, x: 20, step: 12.18, data: "367,370,373,375,375,375,0,384,392,411,422,426,424,420,416,412,408,405,405,399,395,397,393,392,387,372,368,374,375,374,374,372,368,365,365,365,362,362,362,362,362,358,357,362,364,366,372,375,0,0,0,384,384,384,384,384,0,0,0,0,375,375,372,366,384,388,395,397,395,399,405,412,415,410,408,406,408,408" },
    levels: [[379, BLUE]], lines: [[ls, SAL], [lm, BLUE]],
    major: [293, 379], minor: [335, 421], scale: [["20", 311], ["0", 389]],
    badges: [["-6.4662", 372, 40, SAL, "", 406], ["", 404, 40, SAL, "", 427], ["-17,423", 417, 40, BLUE, "", 453]] },
  { oy: 660, y0: 815, y1: 833, times: [["13:00", 130], ["15:00", 274], ["17:00", 421], ["19:00", 568], ["21:00", 715], ["11", 799, 1], ["09:00", 875], ["11:00", 1018]] }
]);

/* 1-minute chart */
const mm = "12,383 50,391 95,398 110,392 137,377 152,398 166,420 193,470 235,493 250,487 265,490 280,478 307,442 350,443 365,453 378,463 393,497 407,517 421,526 435,529 466,529 480,526 491,510 506,490 520,481 549,479 563,466 577,445 605,390 634,362 660,358 676,364 705,366 720,368 747,350 790,350 804,360 818,400 832,420 860,443 875,445 890,437 903,436 918,442 946,427 990,431 1003,425 1017,429 1031,440 1045,447 1060,460 1085,457 1102,461";
const ms = "12,382 60,386 110,388 140,386 152,390 170,400 193,422 220,446 250,462 275,469 307,464 330,456 365,451 385,457 410,475 435,493 478,511 500,508 530,500 577,481 605,450 648,405 690,385 733,378 775,363 804,361 830,378 850,396 875,411 918,424 960,427 1010,427 1045,433 1065,442 1102,448";
const mk = "12,735 24,758 38,770 53,775 67,740 80,752 95,741 109,725 122,688 137,665 152,722 166,768 180,818 193,815 222,797 250,776 265,773 280,758 293,740 307,710 322,709 336,725 364,728 378,756 392,796 407,808 421,794 435,771 449,760 478,758 491,740 520,686 535,693 549,704 563,684 577,640 591,597 605,584 619,601 634,609 648,628 662,643 676,676 690,685 718,680 747,654 761,647 776,698 790,715 804,767 818,784 832,810 847,785 860,766 875,755 889,735 903,722 932,730 960,709 989,730 1003,706 1016,683 1031,703 1045,735 1060,782 1073,769 1088,772 1102,760";
const md = "12,720 40,740 67,755 95,755 109,742 122,720 140,711 155,709 166,712 180,738 193,765 208,788 222,801 240,799 265,790 293,771 320,745 336,723 364,720 378,731 392,750 407,766 421,778 440,786 460,782 478,775 506,745 535,716 563,692 591,661 619,620 634,605 648,604 662,613 676,632 690,652 705,667 733,679 761,667 776,667 790,679 804,700 818,730 832,757 847,778 860,784 875,780 889,768 903,748 918,736 946,722 975,720 1003,718 1031,706 1045,710 1060,722 1073,738 1088,752 1102,763";
const VIO = "#b2b2da", PNK = "#f4cccc";
draw("chart-mid", { ox: 436, x0: 436, x1: 936, left: 439, right: 877 }, [
  { oy: 135, top: 140, bottom: 530, y0: 138, y1: 532,
    levels: [[19, "#ff0000", 1, "5 3"], [142, PURE], [369, K, 2, "5 5"], [607, GRN, 1, "5 4"], [633, K, 2, "5 5"], [844, GRN, 1, "5 4"], [943, PURE], [1062, PURE, 2], [1108, PURE]],
    texts: [["10 078,8", 20, 135, "mk"], ["9 975", 18, 935, "mk"], ["9 959,32", 18, 1055, "mk"], ["9 953,71", 18, 1101, "mk"],
      ["Piv J", 1321, 359, "end mk"], ["mS1 J", 1321, 597, "end mk", GRN], ["Piv M", 1321, 624, "end mk"], ["S1 J", 1321, 834, "end mk", GRN], ["mS2 J", 1321, 1184, "end mk", GRN], ...notice(1177, 18)],
    under: [["12,55 1320,79", PURE, 2, "5 5"], ["12,418 45,417 100,418 150,415 170,423 195,434 235,446 270,457 310,460 345,465 380,478 410,500 450,530 480,547 520,563 550,580 590,595 630,605 665,612 700,630 740,640 775,643 800,648 820,660 860,683 900,692 950,700 1000,713 1050,730 1080,743 1103,745", SAL, 1, "4 2"]],
    candles: { x: 23, step: 14.19, up: "gg", down: "gr", data: `408,412,427,434,r 427,427,427,467,r 430,430,448,450,r 405,415,455,455,g 405,408,448,450,r 445,445,446,480,r 338,397,448,530,g 258,352,407,410,g 293,346,366,380,r 350,364,556,566,r 558,558,614,684,r 608,616,653,655,r 655,658,738,765,r 636,643,737,742,g 620,640,668,705,r 633,661,670,698,r 585,598,661,743,g 590,604,649,655,r 572,601,650,672,g 480,481,605,628,g 452,477,499,540,r 498,499,612,632,r 560,588,616,681,g 567,592,613,620,r 615,622,668,695,r 662,671,731,735,r 731,733,899,932,r 893,898,908,990,r 836,838,908,910,g 822,831,832,920,r 773,824,829,845,g 830,832,838,879,g 778,824,835,840,g 728,731,827,830,g 648,685,733,743,g 667,689,737,742,r 735,737,824,855,r 778,796,824,844,g 688,724,785,788,g 655,661,730,735,g 525,556,664,680,g 501,532,548,577,g 522,529,607,648,r 530,556,607,645,g 545,556,604,625,r 600,609,653,675,r 625,650,682,684,r 607,628,682,690,g 600,625,650,688,r 562,643,660,665,r 575,580,650,652,g 567,570,580,610,g 525,580,596,600,r 588,590,647,665,r 548,586,643,650,g 567,583,691,698,r 680,688,892,900,r 825,847,900,943,g 790,807,850,852,g 743,800,836,838,r 785,790,832,835,g 712,714,785,818,g 710,712,782,787,r 755,774,808,818,r 708,743,806,810,g 698,718,743,765,g 718,718,782,800,r 775,778,806,810,r 765,775,800,802,g 743,757,769,790,g 714,760,806,810,r 793,807,895,954,r 846,868,898,908,g 852,862,938,950,r 855,859,935,950,g 804,865,875,880,r 875,877,902,935,r` },
    major: [132, 286, 442, 597, 750, 905, 1060], minor: [55, 211, 364, 520, 673, 826, 982, 1135],
    scale: [["10 080", 143], ["10 060", 296], ["10 040", 452], ["9 960", 1070]],
    badges: [["10 094,7", 19, 45, "#ff0000", "", 19], ["10 049,1", 346, 45, K], ["10 018,5", 577, 45, GRN, "", 607], ["10 014,9", 622, 45, K, "", 633], ["10 000,8", 722, 45, SAL], ["9 987,8", 820, 39, GRN], ["9 980,5", 878, 39, K, "y"], ["32s", 924, 19, K, "t"]] },
  { oy: 530, top: 533, bottom: 626, y0: 532, y1: 628, fills: [["166,205 180,212 193,220 201,204", "166,204 201,204", "#a8c8a8", "#b0d4b0"]], levels: [[100, BLUE], [203, BLUE]],
    lines: [["12,163 22,166 38,166 53,178 67,155 80,173 95,173 122,124 137,133 152,193 166,205 180,212 193,220 208,190 235,193 250,172 265,181 279,168 293,142 307,145 322,166 336,163 350,165 378,184 392,205 407,205 421,190 449,184 463,187 478,184 491,163 506,151 520,160 535,175 549,167 563,154 577,143 591,127 605,124 619,139 634,130 648,144 662,152 676,154 690,146 718,151 733,136 761,138 776,151 790,140 818,187 832,178 847,172 860,175 889,154 903,162 918,166 932,154 946,151 960,163 975,167 1003,157 1017,163 1031,179 1045,172 1060,184 1073,166 1102,172", K]],
    major: [25, 151, 277], scale: [["100", 40, 1], ["50", 165], ["0", 279, 1]], badges: [["41,335", 149, 36, K]] },
  { oy: 530, top: 629, bottom: 710, y0: 628, y1: 712, fills: [[mm, ms, "#b4f4b4", "#f0b4b4"]],
    bars: { zero: 379, x: 23, step: 14.19, data: "384,384,385,386,387,388,383,372,369,388,405,420,435,432,430,423,411,404,396,372,360,366,366,369,374,390,414,426,423,417,410,405,399,0,362,357,363,363,357,345,327,318,321,318,327,340,350,354,359,366,363,360,360,369,369,0,411,423,423,423,417,405,399,399,390,0,384,384,384,375,0,393,396,402,399,396,393" },
    levels: [[379, BLUE]], lines: [[ms, SAL], [mm, BLUE]],
    major: [316, 379, 442, 505], scale: [["5", 329], ["0", 390], ["-10", 515]],
    badges: [["-1,0096", 369, 40, SAL], ["-5.4284", 416, 40, SAL, "", 448], ["-6,4380", 453, 40, BLUE, "", 460]] },
  { oy: 530, top: 713, bottom: 814, y0: 712, y1: 815, fills: [[mk, md, VIO, PNK]], levels: [[622, BLUE], [785, BLUE]], lines: [[md, SAL, 1, "4 3"], [mk, K]],
    major: [568, 622, 676, 730, 784, 838], minor: [595, 649, 703, 757, 811], scale: [["100", 580, 1], ["80", 632], ["60", 685], ["0", 843, 1]],
    badges: [["29,573", 717, 36, K, "", 760], ["27,671", 762, 36, SAL, "", 765]] },
  { oy: 530, y0: 815, y1: 833, times: [["09:00", 109, 1], ["09:10", 250], ["09:20", 392], ["09:30", 535], ["09:40", 676], ["09:50", 818], ["10:00", 958, 1], ["10:10", 1102], ["10:20", 1244]] }
]);

/* Tick chart */
const rm = "18,345 28,332 40,325 55,322 80,327 94,335 106,345 118,365 145,388 170,402 184,408 197,415 208,417 223,409 235,408 247,411 270,404 314,400 338,388 364,361 376,364 403,370 416,382 442,405 467,430 493,470 517,505 532,517 556,514 571,505 596,496 622,470 634,467 646,455 661,444 680,437 700,437 712,456 725,468 752,481 775,481 802,466 815,445 829,430 841,415 853,396 880,368 892,355 919,357 931,367 943,379 958,394 983,406";
const rs = "18,360 40,348 60,341 94,338 118,347 145,358 170,375 208,391 235,400 270,404 314,402 350,395 364,385 376,380 400,378 416,378 440,392 467,408 481,415 505,438 532,465 556,482 583,490 605,490 646,477 661,470 685,458 712,454 750,463 763,469 790,472 815,468 841,450 865,427 892,402 905,393 919,387 950,384 983,391";
const rk = "18,635 28,620 40,592 55,583 67,609 80,626 94,656 106,692 118,758 133,790 145,802 158,793 170,787 184,797 197,802 208,811 223,778 235,760 260,748 274,731 287,667 314,667 325,661 338,630 352,586 364,574 376,611 403,725 416,775 428,805 442,831 454,835 481,835 505,818 532,815 544,800 556,773 571,749 583,734 596,720 610,702 622,668 634,652 646,626 661,615 673,590 685,602 700,618 712,700 725,762 737,805 752,808 763,802 775,799 790,765 802,735 815,680 829,630 841,595 853,574 880,574 892,581 919,632 931,683 943,710 958,760 983,783";
const rd = "18,611 67,607 94,611 106,630 118,665 133,703 145,738 158,767 170,787 197,797 208,799 223,796 235,791 250,780 274,755 287,733 299,714 314,696 338,665 352,645 364,620 376,610 389,613 403,632 416,667 428,707 442,745 454,783 467,815 481,831 517,827 544,815 571,785 596,757 610,738 634,700 661,653 673,625 690,612 705,611 725,648 737,697 752,733 763,770 775,793 790,796 802,784 815,755 829,720 841,683 853,640 865,607 880,583 892,580 910,585 919,592 931,615 958,680 983,740";
const marks = `<path d="M1177.500 335.500l5.500 6h-3v6h-5v-6h-3z" fill="#44dc44" stroke="#0a8a0a"/>
  <path d="M1134.500 474.500l5.500-6h-3v-6h-5v6h-3z" fill="#ec7070" stroke="#a02424"/>
  <path d="M1186 344h32M1144 464l20-15.500" stroke="#0000ff" stroke-width="2"/>
  <path d="M1216 339l8 5-8 5zM1169 443l-4 9-5.500-7.500z" fill="#0000ff"/>`;
draw("chart-right", { ox: 936, x0: 938, x1: 1431, left: 941, right: 1378 }, [
  { oy: 135, top: 139, bottom: 531, y0: 138, y1: 532,
    levels: [[124, GRN, 1, "5 4"], [187, K, 2, "5 5"], [676, GRN, 1, "5 4"], [905, PURE], [1186, PURE, 2]],
    texts: [["mS1 J", 1323, 112, "end mk", GRN], ["Piv M", 1323, 175, "end mk"], ["S1 J", 1323, 665, "end mk", GRN], ["9 975", 24, 894, "mk"], ["9 959,32", 24, 1178, "mk"], ...notice(1178, 24)],
    candles: { x: 28.5, step: 12.9, up: "gG", down: "gR", data: `352,355,413,420,g 338,349,386,402,r 353,367,386,402,r 393,400,418,435,r 397,420,424,432,r 408,433,476,485,r 440,470,485,505,r 492,493,563,570,r 522,537,550,572,g 522,532,542,588,g 527,530,568,600,r 530,547,553,580,g 547,550,572,577,r 527,563,578,582,r 568,569,587,597,g 495,496,563,563,g 478,493,541,557,r 547,553,559,570,r 511,511,553,555,g 482,514,523,523,r 487,496,511,518,g 503,505,541,545,r 517,541,547,547,g 484,493,547,555,g 438,469,487,493,g 416,418,457,485,g 388,394,413,430,g 375,400,496,515,r 458,486,488,516,r 484,485,511,513,r 505,506,578,583,r 557,590,596,600,r 560,590,616,625,r 607,622,650,655,r 633,643,673,677,r 675,677,766,768,r 720,748,796,858,r 755,802,811,813,r 810,823,860,862,r 835,841,856,930,g 777,778,839,841,g 765,775,797,800,r 740,742,793,822,g 712,724,760,762,r 752,768,770,785,r 676,694,767,770,g 677,696,698,713,r 686,688,757,760,r 685,693,748,750,g 686,688,712,730,r 693,707,715,768,r 717,721,731,775,r 711,739,758,795,r 757,760,913,920,r 865,882,919,920,g 840,876,878,903,r 848,918,919,919,r 863,865,886,903,g 845,847,875,903,r 813,829,887,889,g 768,793,823,825,g 712,742,788,790,g 703,715,739,758,g 703,715,721,758,g 660,667,713,725,g 640,669,671,680,r 598,625,679,681,g 580,622,630,650,g 614,616,697,698,r 683,702,706,725,r 714,716,802,804,r 775,778,793,803,g 740,775,850,852,r 820,823,860,885,g 793,804,820,822,g` },
    extra: marks,
    major: [97, 277, 367, 457, 547, 637, 727, 814, 905, 994, 1083, 1173],
    scale: [["10 020", 106], ["10 010", 287], ["10 005", 376], ["10 000", 467, 1], ["9 995", 556], ["9 990", 643], ["9 985", 733], ["9 975", 913], ["9 970", 1003], ["9 965", 1092], ["9 960", 1178]],
    badges: [["10 018,5", 100, 45, GRN], ["10 014,9", 163, 45, K], ["9 987,8", 652, 39, GRN], ["9 980,5", 781, 39, K, "y"], ["16T", 829, 22, K, "t"]] },
  { oy: 530, top: 534, bottom: 630, y0: 532, y1: 632, fills: [["481,212 493,218 505,223 517,229 532,220 540,212", "481,212 540,212", "#a8c8a8", "#b0d4b0"]], levels: [[106, BLUE], [211, BLUE]],
    lines: [["18,135 28,121 40,133 55,134 67,142 80,146 94,160 106,164 118,184 133,176 145,175 158,184 170,175 184,180 197,184 208,181 223,154 235,169 247,172 260,157 274,163 287,154 299,166 314,166 325,152 338,145 352,130 364,124 376,160 389,157 403,163 416,178 428,184 442,187 454,196 467,199 481,212 493,218 505,223 517,229 532,220 544,196 556,202 571,184 596,187 610,166 622,166 634,181 646,163 661,165 685,171 700,178 712,208 725,199 737,196 752,205 763,187 775,187 802,166 815,151 829,145 841,146 853,136 865,136 880,127 892,124 904,151 919,154 931,178 943,169 958,187 970,179 983,172", K]],
    major: [28, 80, 132, 184, 234, 288], minor: [54, 106, 158, 210, 262], scale: [["100", 43, 1], ["80", 91], ["60", 142], ["20", 244], ["0", 291, 1]], badges: [["44,561", 150, 36, K]] },
  { oy: 530, top: 633, bottom: 705, y0: 632, y1: 707, fills: [[rm, rs, "#b4f4b4", "#f0b4b4"]],
    bars: { zero: 382, x: 28.5, step: 12.9, data: "357,358,360,366,372,0,393,405,408,411,414,411,411,411,408,400,396,396,390,387,378,378,0,375,372,363,358,364,367,372,0,393,402,411,420,426,432,435,441,438,426,417,402,396,390,372,366,366,360,358,357,360,364,387,393,396,402,399,393,387,375,363,355,348,342,339,333,333,342,352,366,375,393,396,399" },
    levels: [[382, BLUE]], lines: [[rs, SAL], [rm, BLUE]],
    major: [325, 382, 438, 495], minor: [354, 410, 466, 522], scale: [["2", 340], ["-2", 448], ["-4", 505]],
    badges: [["-0,3344", 351, 40, SAL, "", 391], ["-0,4855", 377, 40, SAL, "", 397], ["-0,8199", 402, 40, BLUE, "", 406]] },
  { oy: 530, top: 708, bottom: 814, y0: 707, y1: 815, fills: [[rk, rd, VIO, PNK]], levels: [[610, BLUE], [781, BLUE]], lines: [[rd, SAL, 1, "4 3"], [rk, K]],
    major: [553, 610, 667, 724, 781, 838], minor: [582, 639, 696, 753, 811], scale: [["100", 564, 1], ["80", 619], ["60", 676], ["40", 735], ["0", 843, 1]],
    badges: [["33,383", 720, 36, SAL, "", 741], ["19,001", 762, 36, K, "", 783]] },
  { oy: 530, y0: 815, y1: 833, times: [["10:00", 67, 1], ["10:02", 224], ["10:04", 364], ["10:06", 583], ["10:08", 763], ["10:10", 943], ["10:12", 1099], ["10:14", 1240]] }
]);
```
